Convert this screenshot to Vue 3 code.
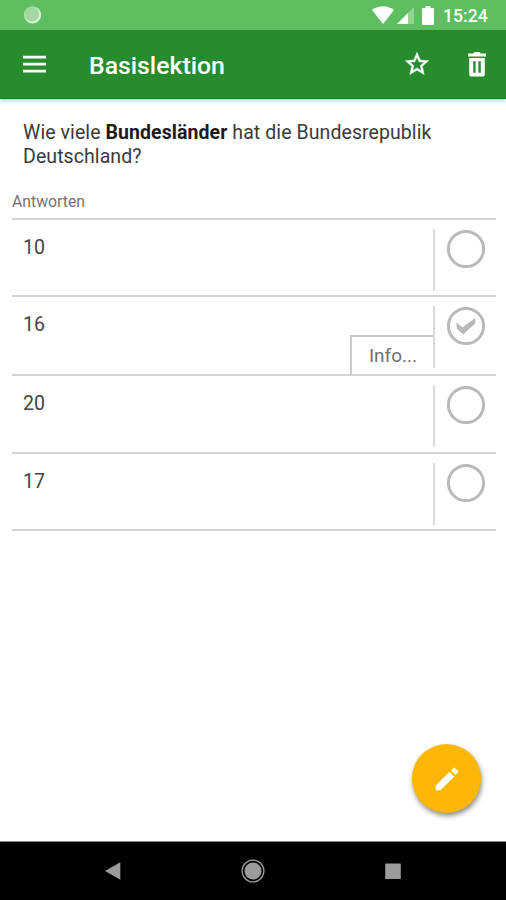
<script setup>
const answers = [
  { text: '10', checked: false, info: false },
  { text: '16', checked: true, info: true },
  { text: '20', checked: false, info: false },
  { text: '17', checked: false, info: false },
]
</script>

<template>
  <div class="screen">
    <header class="status">
      <svg class="sync" width="20" height="20" viewBox="0 0 20 20">
        <circle cx="9.6" cy="10" r="8.6" fill="#d9f2d6" />
        <circle cx="8.7" cy="9" r="7.5" fill="#a3d9a0" />
      </svg>
      <div class="tray">
        <svg class="wifi" width="22" height="18" viewBox="0 0 22 18">
          <path d="M0 4 Q11-3.5 22 4 L11 18Z" fill="#fff" />
        </svg>
        <svg class="signal" width="17" height="17" viewBox="0 0 17 17">
          <path d="M0 17 17 0V17Z" fill="#94d392" />
          <path d="M0 17 11 6V17Z" fill="#fff" />
        </svg>
        <svg class="battery" width="12" height="19" viewBox="0 0 12 19">
          <path d="M3.5 0h5v2H11q1 0 1 1v15q0 1-1 1H1q-1 0-1-1V3q0-1 1-1h2.5Z" fill="#fff" />
        </svg>
        <span class="time">15:24</span>
      </div>
    </header>

    <nav class="appbar">
      <svg class="menu" width="23" height="18" viewBox="0 0 23 18" fill="#fff">
        <path d="M0 .8h23v2.7H0zM0 7.8h23v2.7H0zM0 14.8h23v2.7H0z" />
      </svg>
      <h1 class="title">Basislektion</h1>
      <svg class="star" width="28" height="28" viewBox="0 0 24 24" fill="#fff" stroke="#fff" stroke-width=".4">
        <path d="M22 9.24l-7.19-.62L12 2 9.19 8.63 2 9.24l5.46 4.73L5.82 21 12 17.27 18.18 21l-1.63-7.03L22 9.24zM12 15.4l-3.76 2.27 1-4.28-3.32-2.88 4.38-.38L12 6.1l1.71 4.04 4.38.38-3.32 2.88 1 4.28L12 15.4z" />
      </svg>
      <svg class="trash" width="18" height="25" viewBox="0 0 18 25">
        <path fill="#fff" fill-rule="evenodd" d="M0 1.5h5.2L6.5 0h5l1.3 1.5H18v3H0zM1.2 6h15.6v16q0 2.6-2.6 2.6H3.8q-2.6 0-2.6-2.6zM5.2 9.2v11.6h2.4V9.2zM10.4 9.2v11.6h2.4V9.2z" />
      </svg>
    </nav>

    <main class="content">
      <p class="question">Wie viele <b>Bundesländer</b> hat die Bundesrepublik<br />Deutschland?</p>
      <h2 class="label">Antworten</h2>
      <ul class="answers">
        <li v-for="answer in answers" :key="answer.text" class="answer">
          <div class="body">
            <span class="value">{{ answer.text }}</span>
            <button v-if="answer.info" class="info">Info...</button>
          </div>
          <div class="choice">
            <svg width="40" height="40" viewBox="0 0 40 40">
              <circle cx="20" cy="20" r="17.6" fill="none" stroke="#b9b9b9" stroke-width="3" />
              <path v-if="answer.checked" d="M10.3 16.3 16.5 21.5 29.3 11.7V17.3L17.3 28.5 10.8 22.5Z" fill="#b9b9b9" />
            </svg>
          </div>
        </li>
      </ul>
    </main>

    <button class="fab">
      <svg width="30" height="30" viewBox="0 0 24 24" fill="#fff">
        <path d="M3 17.25V21h3.75L17.81 9.94l-3.75-3.75L3 17.25zM20.71 7.04c.39-.39.39-1.02 0-1.41l-2.34-2.34c-.39-.39-1.02-.39-1.41 0l-1.83 1.83 3.75 3.75 1.83-1.83z" />
      </svg>
    </button>

    <footer class="navbar">
      <svg width="24" height="24" viewBox="0 0 24 24"><path d="M4 12 19.3 3.3V20.7Z" fill="#9b9b9b" /></svg>
      <svg width="24" height="24" viewBox="0 0 24 24">
        <circle cx="12" cy="12" r="10.9" fill="none" stroke="#9b9b9b" stroke-width="1.3" />
        <circle cx="12" cy="12" r="8.5" fill="#9b9b9b" />
      </svg>
      <svg width="24" height="24" viewBox="0 0 24 24"><rect x="4.2" y="4.5" width="15.6" height="15.6" rx=".7" fill="#9b9b9b" /></svg>
    </footer>
  </div>
</template>

<style>
body {
  margin: 0;
}
</style>

<style scoped>
.screen {
  position: relative;
  display: flex;
  flex-direction: column;
  width: 506px;
  height: 900px;
  overflow: hidden;
  background: #fff;
  font-family: Roboto, "Liberation Sans", sans-serif;
}
.screen svg {
  display: block;
  flex: none;
}
.status {
  display: flex;
  justify-content: space-between;
  height: 30px;
  box-sizing: border-box;
  padding: 5px 19px 0 23px;
  background: #5ebf60;
}
.tray {
  display: flex;
  align-items: flex-start;
}
.signal {
  margin: 2px 8px 0 3px;
}
.wifi {
  margin-top: 1px;
}
.battery {
  margin-top: 1px;
}
.time {
  width: 44px;
  margin-left: 9px;
  font-size: 17.6px;
  font-weight: 500;
  line-height: 22px;
  color: #fff;
}
.appbar {
  display: flex;
  align-items: center;
  height: 69px;
  box-sizing: border-box;
  padding: 0 20px 0 23px;
  background: #268c2e;
  border-bottom: 1px solid #158020;
  box-shadow: 0 2px 3px rgba(0, 0, 0, 0.2);
}
.title {
  flex: 1;
  margin: 3px 0 0 43px;
  font-size: 24.8px;
  font-weight: 500;
  line-height: 30px;
  color: #fff;
}
.star {
  margin-right: 37px;
}
.content {
  flex: 1;
  padding: 22px 10px 0 12px;
}
.question {
  margin: 0 0 0 11px;
  font-size: 19.5px;
  line-height: 24px;
  letter-spacing: 0.08px;
  color: #3a3a3a;
  white-space: nowrap;
}
.question b {
  color: #1c1c1c;
}
.label {
  margin: 23px 0 6px;
  font-size: 15.8px;
  font-weight: 400;
  line-height: 20px;
  color: #737373;
}
.answers {
  margin: 0;
  padding: 0;
  list-style: none;
  border-top: 2px solid #d3d3d3;
}
.answer {
  display: flex;
  height: 77px;
  box-sizing: border-box;
  border-bottom: 2px solid #d3d3d3;
}
.answer:nth-child(2) {
  height: 79px;
}
.answer:nth-child(3) {
  height: 78px;
}
.body {
  flex: 1;
  display: flex;
  justify-content: space-between;
  padding: 16px 0 0 11px;
}
.value {
  font-size: 19.5px;
  line-height: 24px;
  color: #444;
}
.info {
  align-self: flex-end;
  width: 83px;
  height: 39px;
  box-sizing: border-box;
  padding: 0 0 0 1px;
  border: solid #cacaca;
  border-width: 2px 0 0 2px;
  background: #fff;
  font: 19px/36px Roboto, "Liberation Sans", sans-serif;
  color: #707070;
}
.choice {
  width: 63px;
  height: 62px;
  margin-top: 9px;
  box-sizing: border-box;
  padding-left: 10.5px;
  border-left: 2px solid #d9d9d9;
}
.fab {
  position: absolute;
  left: 412px;
  top: 744px;
  display: flex;
  align-items: center;
  justify-content: center;
  width: 69px;
  height: 69px;
  padding: 0;
  border: 0;
  border-radius: 50%;
  background: #fbb704;
  box-shadow: 1px 3px 5px rgba(0, 0, 0, 0.45);
}
.navbar {
  display: flex;
  align-items: center;
  justify-content: center;
  gap: 116px;
  height: 59px;
  box-sizing: border-box;
  border-top: 1px solid #8a8a8a;
  background: #000;
}
</style>
